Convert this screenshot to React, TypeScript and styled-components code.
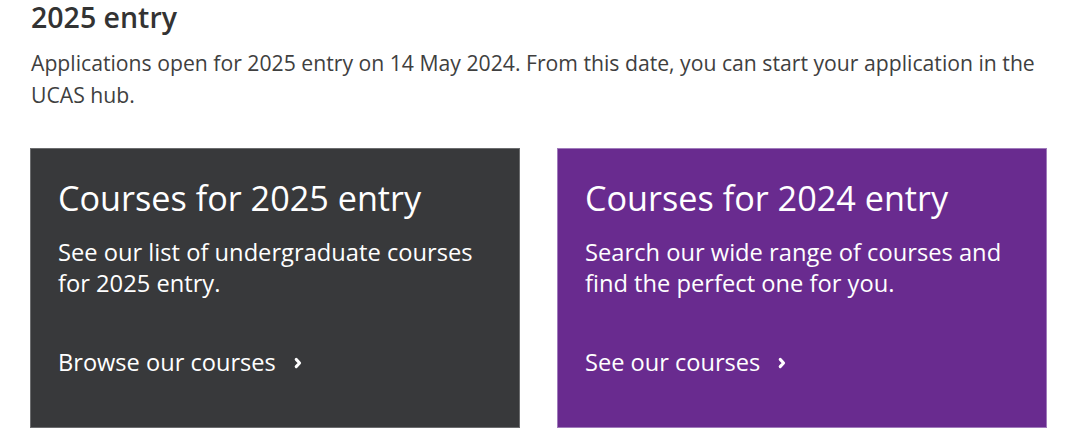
import React from "react";
import styled, { createGlobalStyle } from "styled-components";

const Global = createGlobalStyle`
  html, body { margin: 0; padding: 0; background: #ffffff; }
  body { font-family: "Open Sans", "Noto Sans", sans-serif; color: #333333; }
  * { box-sizing: border-box; }
`;

const Page = styled.main`
  padding: 0 31px;
  width: 1080px;
`;

const Title = styled.h2`
  margin: 0;
  font-size: 28.5px;
  line-height: 34px;
  font-weight: 600;
  color: #333333;
`;

const Intro = styled.p`
  margin: 13px 0 0;
  font-size: 21.2px;
  line-height: 32px;
  color: #3f3f3f;
  max-width: 1015px;
`;

const Cards = styled.div`
  display: grid;
  grid-template-columns: 490px 490px;
  column-gap: 37px;
  margin-top: 37px;
  margin-left: -1px;
`;

const Card = styled.a<{ $bg: string; $border: string }>`
  display: flex;
  flex-direction: column;
  height: 280px;
  padding: 24px 27px 0 27px;
  background: ${(p) => p.$bg};
  border: 1px solid ${(p) => p.$border};
  color: #ffffff;
  text-decoration: none;
`;

const CardTitle = styled.h3`
  margin: 0;
  font-size: 34.2px;
  line-height: 50px;
  font-weight: 400;
`;

const CardText = styled.p`
  margin: 14px 0 0;
  font-size: 23.7px;
  line-height: 31px;
`;

const CardLink = styled.span`
  display: flex;
  align-items: center;
  gap: 18px;
  margin-top: 48px;
  font-size: 23.6px;
  line-height: 31px;
`;

const Chevron = () => (
  <svg width="8" height="12" viewBox="0 0 8 12" aria-hidden="true">
    <path d="M2.2 2.4 L5.6 6 L2.2 9.6" fill="none" stroke="#ffffff" strokeWidth="3" strokeLinecap="round" strokeLinejoin="round" />
  </svg>
);

export default function App() {
  return (
    <Page>
      <Global />
      <Title>2025 entry</Title>
      <Intro>
        Applications open for 2025 entry on 14 May 2024. From this date, you can start your application in the UCAS hub.
      </Intro>
      <Cards>
        <Card href="#" $bg="#38393b" $border="#6b6c6e">
          <CardTitle>Courses for 2025 entry</CardTitle>
          <CardText>See our list of undergraduate courses for 2025 entry.</CardText>
          <CardLink>
            Browse our courses <Chevron />
          </CardLink>
        </Card>
        <Card href="#" $bg="#692b8f" $border="#a07bbb">
          <CardTitle>Courses for 2024 entry</CardTitle>
          <CardText>Search our wide range of courses and find the perfect one for you.</CardText>
          <CardLink>
            See our courses <Chevron />
          </CardLink>
        </Card>
      </Cards>
    </Page>
  );
}
